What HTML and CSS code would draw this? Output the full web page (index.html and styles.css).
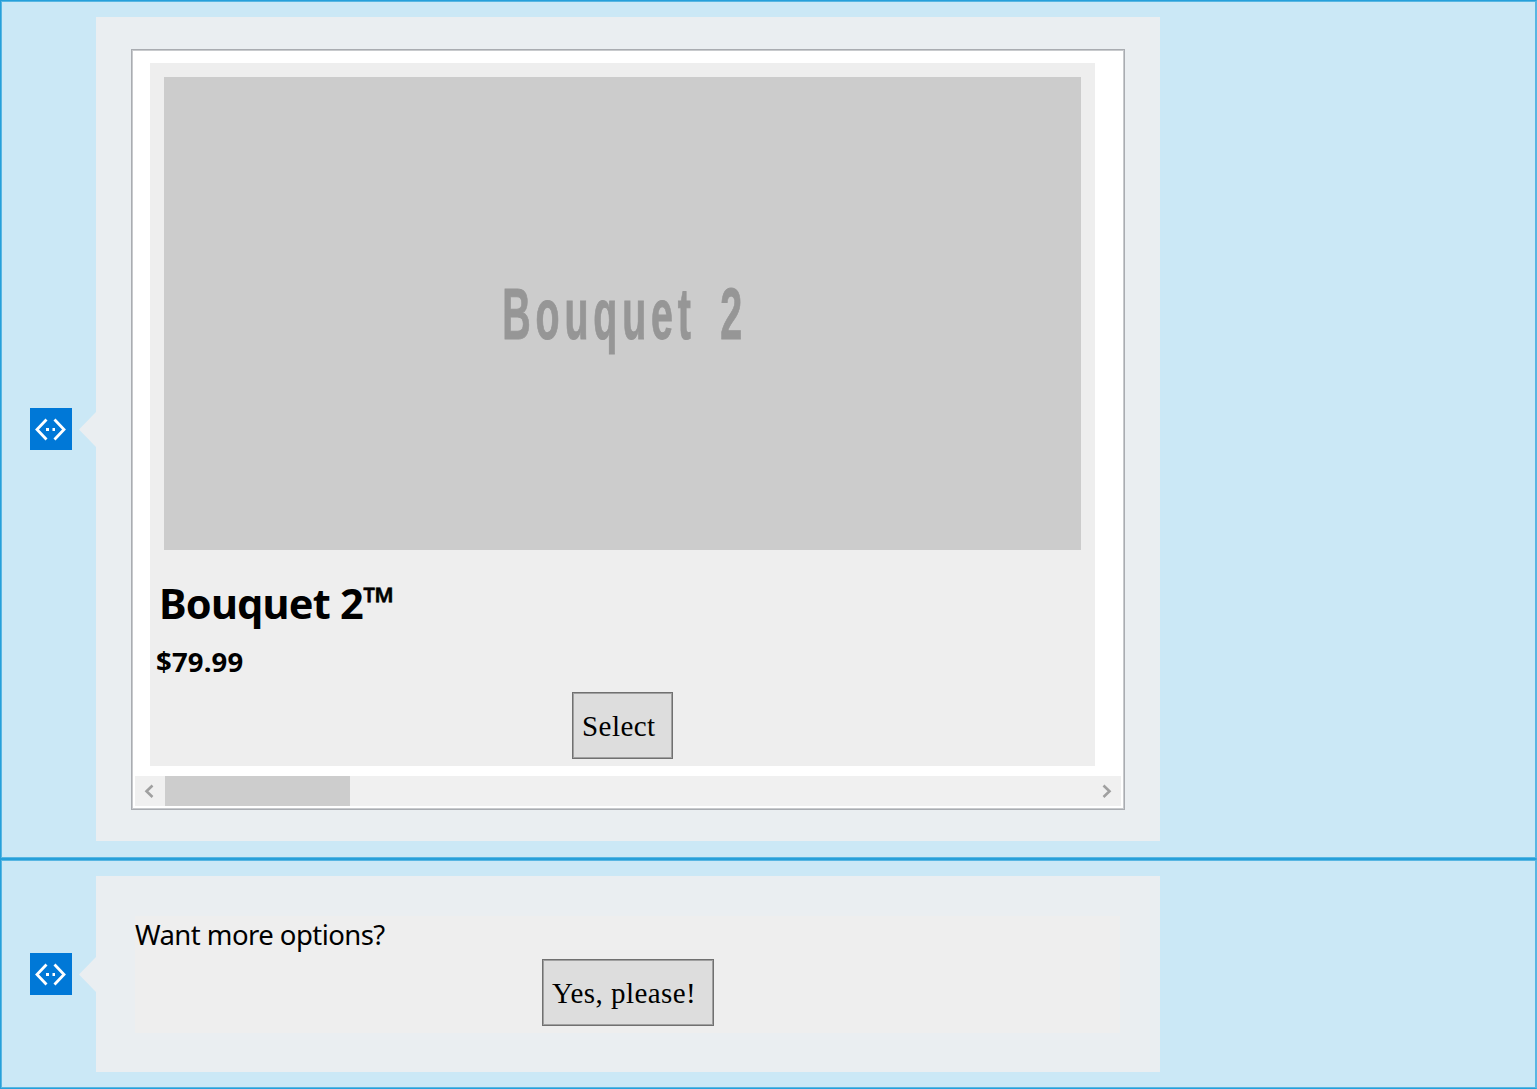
FILE: index.html
```
<!DOCTYPE html>
<html lang="en">
<head>
<meta charset="utf-8">
<title>Bouquets</title>
<link rel="stylesheet" href="styles.css">
</head>
<body>
<main class="chat">
  <section class="message message-card">
    <svg class="avatar" viewBox="0 0 42 42"><path d="M16.500 11.500 7 21.500 16.500 31.500M24.500 11.500 34 21.500 24.500 31.500" fill="none" stroke="#fff" stroke-width="2.800"/><path d="M16 20h3v3h-3zM22.500 20h2.500v3h-2.500z" fill="#fff"/></svg>
    <svg class="pointer" viewBox="0 0 17 35"><path d="M17 0v35L0 17.500z"/></svg>
    <div class="bubble">
      <div class="carousel">
        <article class="card">
          <div class="picture"><span class="caption">Bouquet 2</span></div>
          <h1 class="title">Bouquet 2<span class="mark">™</span></h1>
          <p class="price">$79.99</p>
          <button class="button select"><span>Select</span></button>
        </article>
        <div class="scrollbar">
          <svg class="arrow" viewBox="0 0 30 30"><path d="M17.500 9.500 11.500 15.300 17.500 21"/></svg>
          <div class="thumb"></div>
          <svg class="arrow" viewBox="0 0 30 30"><path d="M12.500 9.500 18.500 15.300 12.500 21"/></svg>
        </div>
      </div>
    </div>
  </section>
  <section class="message message-prompt">
    <svg class="avatar" viewBox="0 0 42 42"><path d="M16.500 11.500 7 21.500 16.500 31.500M24.500 11.500 34 21.500 24.500 31.500" fill="none" stroke="#fff" stroke-width="2.800"/><path d="M16 20h3v3h-3zM22.500 20h2.500v3h-2.500z" fill="#fff"/></svg>
    <svg class="pointer" viewBox="0 0 17 35"><path d="M17 0v35L0 17.500z"/></svg>
    <div class="bubble">
      <div class="prompt">
        <p class="question">Want more options?</p>
        <button class="button confirm"><span>Yes, please!</span></button>
      </div>
    </div>
  </section>
</main>
</body>
</html>
```
FILE: styles.css
```
* { box-sizing: border-box; }
body { margin: 0; font-family: "Noto Sans", sans-serif; color: #000; }
h1, p { margin: 0; white-space: nowrap; }
svg { display: block; flex: none; }

.chat { width: 1537px; height: 1089px; overflow: hidden; }
.message {
  display: flex;
  align-items: center;
  padding-left: 29px;
  background: #cbe8f6;
  border: 1px solid #26a0da;
  border-right-color: #58b6e2;
  box-shadow: inset 0 0 0 1px #58b6e2;
}
.message-card { height: 859px; padding-bottom: 1px; }
.message-prompt { height: 230px; }
.avatar { width: 42px; height: 42px; background: #0078d7; }
.pointer { width: 17px; height: 35px; margin-left: 7px; fill: #eaeef1; }
.bubble { width: 1064px; background: #eaeef1; }
.message-card .bubble { height: 824px; padding: 32px 35px 0; }
.message-prompt .bubble { height: 196px; padding: 40px 40px 0 39px; }

.carousel {
  height: 761px;
  padding: 13px 3px 0 18px;
  background: #fff;
  border: 1px solid #a9acb1;
  box-shadow: inset 0 0 0 1px #c8cacd;
}
.card {
  width: 945px;
  height: 703px;
  padding-top: 14px;
  background: #eee;
  display: flex;
  flex-direction: column;
}
.picture {
  width: 917px;
  height: 473px;
  margin-left: 14px;
  background: #ccc;
  display: flex;
  align-items: center;
  justify-content: center;
}
.caption {
  font: 700 73px/80px "Liberation Sans", sans-serif;
  letter-spacing: 9px;
  word-spacing: 16px;
  color: #969696;
  -webkit-text-stroke: 1px #969696;
  white-space: nowrap;
  transform: scaleX(.539);
  padding: 1px 0 0 6px;
}
.title { height: 62px; margin: 22px 0 0 9px; font-size: 41.5px; line-height: 62px; letter-spacing: -.8px; }
.mark { display: inline-block; line-height: 1; font-size: 41px; -webkit-text-stroke: .6px #000; transform: translateY(-2px); }
.price { height: 40px; margin: 8px 0 0 6px; font-size: 27.5px; font-weight: 700; line-height: 40px; letter-spacing: .15px; }
.button {
  height: 67px;
  padding: 0 0 0 9px;
  text-align: left;
  font: 29px/60px "Liberation Serif", serif;
  letter-spacing: .45px;
  color: #000;
  background: #ddd;
  border: 1px solid #707070;
  box-shadow: inset 0 0 0 1px #a0a0a0;
}
.select { width: 101px; margin: 10px 0 0 422px; }
.scrollbar { display: flex; width: 986px; height: 30px; margin: 10px 0 0 -15px; background: #f0f0f0; }
.arrow { width: 30px; height: 30px; fill: none; stroke: #a0a0a0; stroke-width: 2.6; }
.thumb { width: 185px; margin-right: auto; background: #cdcdcd; }

.prompt { height: 117px; background: #eee; }
.question { height: 43px; font-size: 27.5px; line-height: 38px; letter-spacing: -.55px; }
.confirm { display: block; width: 172px; margin-left: 407px; }
```
